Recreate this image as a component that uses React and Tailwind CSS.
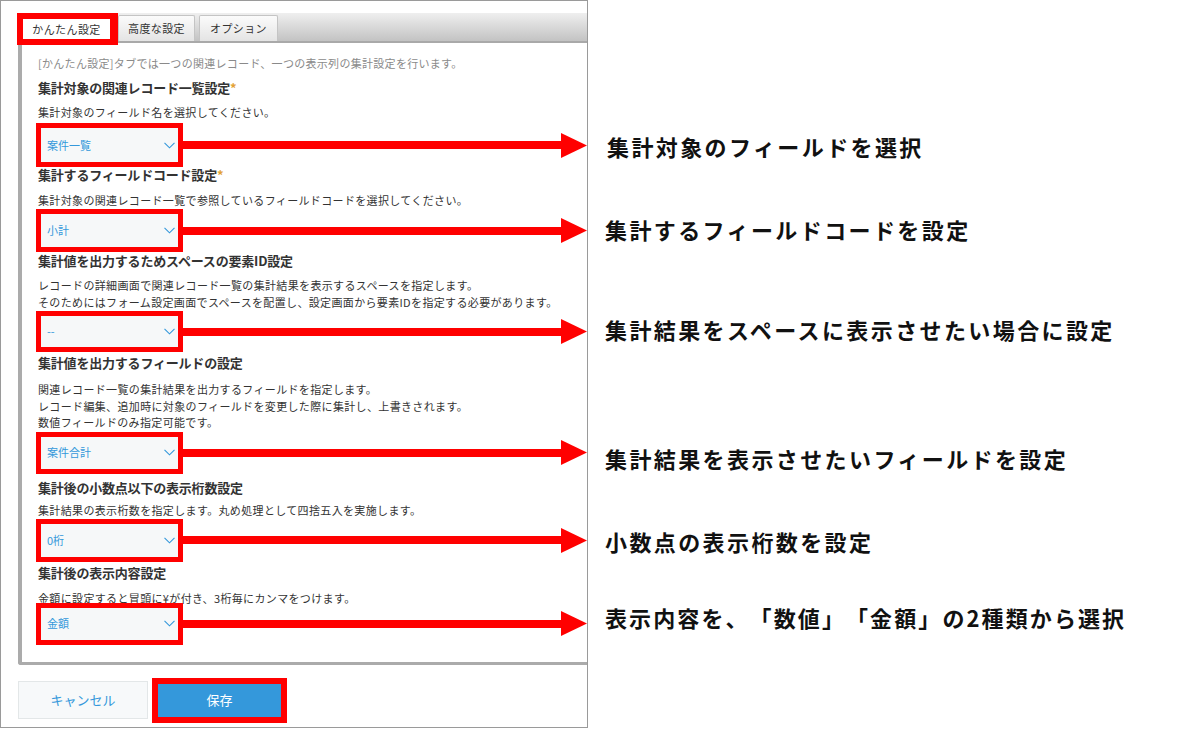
import React from "react";

function Chevron() {
  return (
    <svg width="11" height="7" viewBox="0 0 11 7">
      <path d="M0.5 0.8 L5.5 5.8 L10.5 0.8" fill="none" stroke="#3498db" strokeWidth="1.1" />
    </svg>
  );
}

function Arrow() {
  return (
    <div className="flex-1 flex items-center">
      <div className="flex-1 h-[8px] bg-[#ff0000]" />
      <svg width="26" height="25" viewBox="0 0 26 25" className="shrink-0">
        <polygon points="0,0 26,12.5 0,25" fill="#ff0000" />
      </svg>
    </div>
  );
}

function SelectRow({ value, h, mt }) {
  return (
    <div className={`flex items-center ml-[-2px] ${mt}`}>
      <div
        className={`w-[147px] ${h} border-[5px] border-[#ff0000] bg-[#f6f8f9] flex items-center justify-between pl-[6px] pr-[3px] shrink-0`}
      >
        <span className="text-[11px] text-[#3498db] leading-none">{value}</span>
        <Chevron />
      </div>
      <Arrow />
    </div>
  );
}

function Heading({ children, star, mt }) {
  return (
    <div className={`text-[13px] font-bold text-[#333] leading-[16px] tracking-[-0.2px] ${mt}`}>
      {children}
      {star && <span className="text-[#e3a234] font-bold">*</span>}
    </div>
  );
}

function Desc({ children, mt, lh = "leading-[16px]" }) {
  return <div className={`text-[11px] text-[#333] tracking-[0.35px] ${lh} ${mt}`}>{children}</div>;
}

export default function App() {
  return (
    <div className="w-[1200px] h-[729px] bg-white flex font-['Noto_Sans_CJK_JP','Noto_Sans',sans-serif] overflow-hidden [text-spacing-trim:space-all]">
      {/* left screenshot */}
      <div className="w-[588px] h-[728px] border border-[#9a9a9a] flex flex-col shrink-0">
        {/* tab bar */}
        <div className="mt-[12px] ml-[17px] h-[30px] border-b-[2px] border-[#a9a9a9] bg-gradient-to-b from-[#efefef] to-[#c3c3c3] flex items-start">
          <div className="relative z-10 ml-[-1px] w-[101px] h-[32px] border-t-[6px] border-b-[6px] border-l-[6px] border-r-[8px] border-[#ff0000] bg-white flex items-center justify-center text-[11px] text-[#333] tracking-[0.4px]">
            かんたん設定
          </div>
          <div className="mt-[2px] w-[77px] h-[26px] border border-b-0 border-[#c4c4c4] rounded-t-[2px] bg-gradient-to-b from-[#fbfbfb] to-[#e4e4e4] flex items-center justify-center text-[11px] text-[#333] tracking-[0.4px]">
            高度な設定
          </div>
          <div className="mt-[2px] ml-[4px] w-[79px] h-[26px] border border-b-0 border-[#c4c4c4] rounded-t-[2px] bg-gradient-to-b from-[#fbfbfb] to-[#e4e4e4] flex items-center justify-center text-[11px] text-[#333] tracking-[0.4px]">
            オプション
          </div>
        </div>

        {/* panel */}
        <div className="ml-[17px] border-l-[4px] border-b-[3px] border-[#ababab] rounded-bl-[3px] pl-[16px] pt-[12px] pb-[17px] flex flex-col">
          <div className="text-[11px] text-[#8a8a8a] leading-[16px] tracking-[0.3px]">
            [かんたん設定]タブでは一つの関連レコード、一つの表示列の集計設定を行います。
          </div>

          <Heading star mt="mt-[9px]">集計対象の関連レコード一覧設定</Heading>
          <Desc mt="mt-[8px]">集計対象のフィールド名を選択してください。</Desc>
          <SelectRow value="案件一覧" h="h-[44px]" mt="mt-[3px]" />

          <Heading star mt="mt-0">集計するフィールドコード設定</Heading>
          <Desc mt="mt-[9px]">集計対象の関連レコード一覧で参照しているフィールドコードを選択してください。</Desc>
          <SelectRow value="小計" h="h-[43px]" mt="mt-[1px]" />

          <Heading mt="mt-[1px]">集計値を出力するためスペースの要素ID設定</Heading>
          <Desc mt="mt-[8px]" lh="leading-[17px]">
            レコードの詳細画面で関連レコード一覧の集計結果を表示するスペースを指定します。
            <br />
            そのためにはフォーム設定画面でスペースを配置し、設定画面から要素IDを指定する必要があります。
          </Desc>
          <SelectRow value="--" h="h-[41px]" mt="mt-0" />

          <Heading mt="mt-[3px]">集計値を出力するフィールドの設定</Heading>
          <Desc mt="mt-[10px]" lh="leading-[16.5px]">
            関連レコード一覧の集計結果を出力するフィールドを指定します。
            <br />
            レコード編集、追加時に対象のフィールドを変更した際に集計し、上書きされます。
            <br />
            数値フィールドのみ指定可能です。
          </Desc>
          <SelectRow value="案件合計" h="h-[42px]" mt="mt-[1px]" />

          <Heading mt="mt-[6px]">集計後の小数点以下の表示桁数設定</Heading>
          <Desc mt="mt-[6px]">集計結果の表示桁数を指定します。丸め処理として四捨五入を実施します。</Desc>
          <SelectRow value="0桁" h="h-[43px]" mt="mt-[1px]" />

          <Heading mt="mt-[3px]">集計後の表示内容設定</Heading>
          <Desc mt="mt-[9px]">金額に設定すると冒頭に¥が付き、3桁毎にカンマをつけます。</Desc>
          <SelectRow value="金額" h="h-[42px]" mt="mt-[-3px]" />
        </div>

        {/* buttons */}
        <div className="mt-[13px] ml-[17px] flex items-center">
          <div className="w-[130px] h-[38px] bg-[#f7f9fa] border border-[#e3e7e8] flex items-center justify-center text-[13px] text-[#3498db]">
            キャンセル
          </div>
          <div className="ml-[4px] w-[135px] h-[45px] border-[6px] border-[#ff0000] bg-[#3498db] flex items-center justify-center text-[13px] text-white">
            保存
          </div>
        </div>
      </div>

      {/* annotations */}
      <div className="ml-[17px] flex flex-col text-[22px] font-bold text-[#111] tracking-[2.4px] leading-[30px] whitespace-nowrap">
        <div className="mt-[131px] ml-[2px]">集計対象のフィールドを選択</div>
        <div className="mt-[53px]">集計するフィールドコードを設定</div>
        <div className="mt-[70px]">集計結果をスペースに表示させたい場合に設定</div>
        <div className="mt-[99px]">集計結果を表示させたいフィールドを設定</div>
        <div className="mt-[53px]">小数点の表示桁数を設定</div>
        <div className="mt-[46px] tracking-[2.1px]">表示内容を、「数値」「金額」の2種類から選択</div>
      </div>
    </div>
  );
}
